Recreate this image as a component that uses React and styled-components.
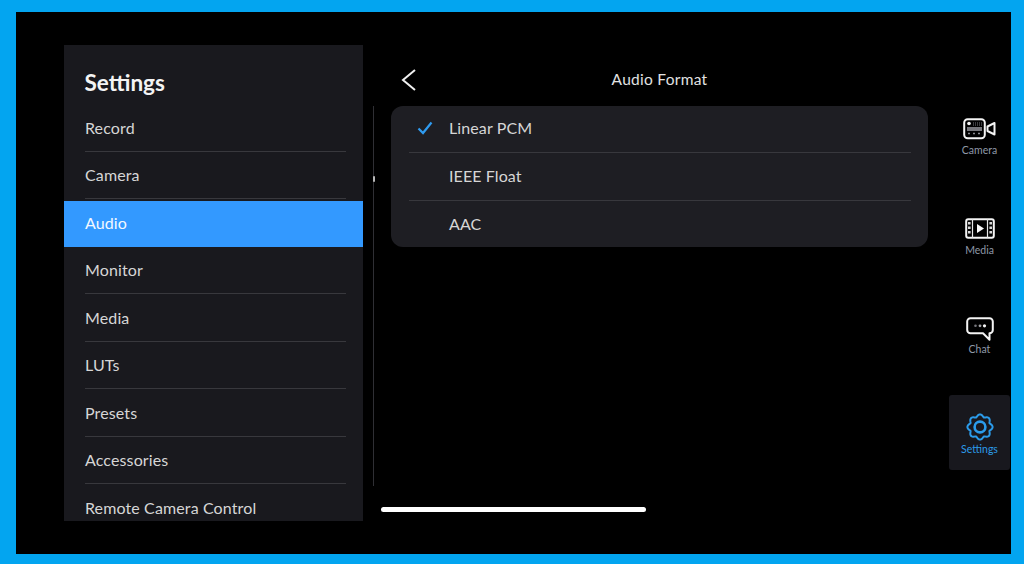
import React from 'react';
import styled, { createGlobalStyle } from 'styled-components';

const Global = createGlobalStyle`
  html, body { margin: 0; padding: 0; background: #000; }
  body { font-family: Lato, "Open Sans", sans-serif; }
`;

const Frame = styled.div`
  box-sizing: border-box;
  width: 1024px;
  height: 564px;
  background: #000;
  border-style: solid;
  border-color: #03a5f0;
  border-width: 12px 13px 10px 16px;
  padding: 33px 0 0 48px;
  display: flex;
  overflow: hidden;
`;

const Sidebar = styled.aside`
  width: 299px;
  height: 476px;
  flex: none;
  background: #19191e;
  overflow: hidden;
`;

const SidebarTitle = styled.h1`
  margin: 0;
  height: 59px;
  box-sizing: border-box;
  padding: 24px 0 0 20.5px;
  font-size: 22.5px;
  line-height: 28px;
  font-weight: 700;
  color: #f4f4f4;
`;

const MenuItem = styled.div`
  height: 47.5px;
  box-sizing: border-box;
  display: flex;
  align-items: center;
  position: relative;
  padding: ${p => (p.$active ? '0 0 3px 21px' : '0 0 1px 21px')};
  font-size: 16px;
  letter-spacing: 0.12px;
  color: ${p => (p.$active ? '#f2f8ff' : '#d6d6d6')};
  background: ${p => (p.$active ? '#3399ff' : 'transparent')};
  background-clip: padding-box;
  border-top: ${p => (p.$active ? '2px solid transparent' : 'none')};
  &::after {
    content: '';
    position: absolute;
    left: 21px;
    right: 17px;
    bottom: 0;
    height: 1px;
    background: ${p => (p.$active ? 'transparent' : '#38383d')};
  }
`;

const Detail = styled.section`
  width: 586px;
  flex: none;
  display: flex;
  flex-direction: column;
`;

const DetailHeader = styled.header`
  height: 61px;
  margin-left: 28px;
  width: 537px;
  flex: none;
  position: relative;
  display: flex;
  align-items: center;
  justify-content: center;
  color: #e2e2e2;
  font-size: 15.5px;
  letter-spacing: 0.27px;
  padding-top: 7px;
  box-sizing: border-box;
`;

const BackButton = styled.svg`
  position: absolute;
  left: 10px;
  top: 24px;
`;

const DetailBody = styled.div`
  display: flex;
  gap: 17px;
  padding-left: 10px;
  height: 380px;
  flex: none;
  align-items: flex-start;
`;

const ScrollTrack = styled.div`
  width: 1px;
  height: 380px;
  flex: none;
  background: #2f2f34;
  position: relative;
  &::after {
    content: '';
    position: absolute;
    left: 0;
    top: 70px;
    width: 2px;
    height: 6px;
    border-radius: 1px;
    background: #b8b8b8;
  }
`;

const Card = styled.div`
  width: 537px;
  height: 141px;
  border-radius: 12px;
  background: #1e1e23;
  padding: 0 17px 0 18px;
  box-sizing: border-box;
`;

const Option = styled.div`
  height: ${p => (p.$first ? 47 : 48)}px;
  box-sizing: border-box;
  display: flex;
  align-items: center;
  gap: 15px;
  font-size: 16px;
  letter-spacing: 0.1px;
  color: #d6d6d6;
  border-bottom: ${p => (p.$last ? 'none' : '1px solid #38383d')};
  padding-bottom: ${p => (p.$last ? 4 : 3)}px;
`;

const CheckSlot = styled.span`
  width: 17px;
  height: 16px;
  margin-left: 8px;
  flex: none;
  display: flex;
  align-items: center;
`;

const HomeIndicator = styled.div`
  width: 265px;
  height: 5px;
  margin: 21px 0 0 18px;
  border-radius: 3px;
  background: #fff;
  flex: none;
`;

const TabRail = styled.nav`
  width: 62px;
  flex: none;
  display: flex;
  flex-direction: column;
  padding-top: 68px;
`;

const Tab = styled.div`
  width: 61px;
  height: ${p => p.$h}px;
  box-sizing: border-box;
  flex: none;
  display: flex;
  flex-direction: column;
  align-items: center;
  padding-top: ${p => p.$pt}px;
  border-radius: 3px;
  background: ${p => (p.$active ? '#18181e' : 'transparent')};
`;

const TabIcon = styled.svg`
  display: block;
  flex: none;
`;

const TabLabel = styled.span`
  font-size: 10.5px;
  line-height: 13px;
  margin-top: ${p => p.$mt}px;
  color: ${p => (p.$active ? '#2b9bea' : '#8f99a8')};
`;

const CameraIcon = () => (
  <TabIcon width="33" height="22" viewBox="0 0 33 22" fill="none">
    <rect x="1.2" y="1.2" width="20.600" height="19" rx="3.500" stroke="#f4f4f4" strokeWidth="2" />
    <path d="M24.500 8.500 L31.500 5 V16.500 L24.500 13 Z" stroke="#f4f4f4" strokeWidth="2" strokeLinejoin="round" />
    <circle cx="6" cy="5.500" r="1.800" fill="#f4f4f4" />
    <rect x="4" y="9" width="15" height="4" fill="#77777c" />
    <path d="M10 5h9M10 7h9" stroke="#77777c" strokeWidth="1" strokeDasharray="1 1" />
    <path d="M5 15.500h2M10 15.500h2M15 15.500h2" stroke="#8a8a8f" strokeWidth="1.600" />
  </TabIcon>
);

const MediaIcon = () => (
  <TabIcon width="30" height="21" viewBox="0 0 30 21" fill="none">
    <rect x="1.200" y="1.200" width="27.600" height="18.600" rx="2" stroke="#f4f4f4" strokeWidth="2" />
    <path d="M7.500 1v19M22.500 1v19" stroke="#e8e8e8" strokeWidth="1.200" />
    <path d="M4.300 4v13.500M25.700 4v13.500" stroke="#d8d8d8" strokeWidth="2.600" strokeDasharray="2.500 2" />
    <path d="M12 6 L19 10.500 L12 15 Z" fill="#f7f7f7" />
  </TabIcon>
);

const ChatIcon = () => (
  <TabIcon width="28" height="24" viewBox="0 0 28 24" fill="none">
    <path
      d="M4.500 1.200h19A3.300 3.300 0 0 1 26.800 4.500v8.500a3.300 3.300 0 0 1-3.300 3.300v6.500L17 16.300H4.500A3.300 3.300 0 0 1 1.200 13v-8.500A3.300 3.300 0 0 1 4.500 1.200Z"
      stroke="#f4f4f4"
      strokeWidth="2"
      strokeLinejoin="round"
    />
    <circle cx="9.500" cy="8.800" r="1.300" fill="#77777c" />
    <circle cx="14" cy="8.800" r="1.400" fill="#a5a5a8" />
    <circle cx="18.500" cy="8.800" r="1.600" fill="#f5f5f5" />
  </TabIcon>
);

const gearPath = (() => {
  const cx = 14, cy = 14, lobes = 8, rOut = 12.6, rIn = 10.2;
  const pts = [];
  const N = 96;
  for (let i = 0; i <= N; i++) {
    const a = (i / N) * Math.PI * 2 - Math.PI / 2;
    const s = Math.pow((Math.cos(a * lobes) + 1) / 2, 0.7);
    const r = rIn + (rOut - rIn) * s;
    pts.push(`${(cx + r * Math.cos(a)).toFixed(2)} ${(cy + r * Math.sin(a)).toFixed(2)}`);
  }
  return `M${pts.join('L')}Z`;
})();

const GearIcon = () => (
  <TabIcon width="28" height="28" viewBox="0 0 28 28" fill="none">
    <path d={gearPath} stroke="#2b9bea" strokeWidth="2" strokeLinejoin="round" />
    <circle cx="14" cy="14" r="5.400" stroke="#2b9bea" strokeWidth="2.600" />
  </TabIcon>
);

const menu = ['Record', 'Camera', 'Audio', 'Monitor', 'Media', 'LUTs', 'Presets', 'Accessories', 'Remote Camera Control'];

export default function App() {
  return (
    <>
      <Global />
      <Frame>
        <Sidebar>
          <SidebarTitle>Settings</SidebarTitle>
          {menu.map(m => (
            <MenuItem key={m} $active={m === 'Audio'}>
              {m}
            </MenuItem>
          ))}
        </Sidebar>
        <Detail>
          <DetailHeader>
            <BackButton width="16" height="22" viewBox="0 0 16 22" fill="none">
              <path d="M14 1 L2 11 L14 21" stroke="#f0f0f0" strokeWidth="2" />
            </BackButton>
            Audio Format
          </DetailHeader>
          <DetailBody>
            <ScrollTrack />
            <Card>
              <Option $first>
                <CheckSlot>
                  <svg width="16" height="14" viewBox="0 0 16 14" fill="none">
                    <path d="M1.500 7.500 L6 12 L14.500 1.500" stroke="#2f9bf0" strokeWidth="2.200" />
                  </svg>
                </CheckSlot>
                Linear PCM
              </Option>
              <Option>
                <CheckSlot />
                IEEE Float
              </Option>
              <Option $last>
                <CheckSlot />
                AAC
              </Option>
            </Card>
          </DetailBody>
          <HomeIndicator />
        </Detail>
        <TabRail>
          <Tab $h={99.500} $pt={5}>
            <CameraIcon />
            <TabLabel $mt={4}>Camera</TabLabel>
          </Tab>
          <Tab $h={99.500} $pt={5}>
            <MediaIcon />
            <TabLabel $mt={5}>Media</TabLabel>
          </Tab>
          <Tab $h={83} $pt={5}>
            <ChatIcon />
            <TabLabel $mt={2}>Chat</TabLabel>
          </Tab>
          <Tab $h={75} $active $pt={18}>
            <GearIcon />
            <TabLabel $mt={2} $active>Settings</TabLabel>
          </Tab>
        </TabRail>
      </Frame>
    </>
  );
}
